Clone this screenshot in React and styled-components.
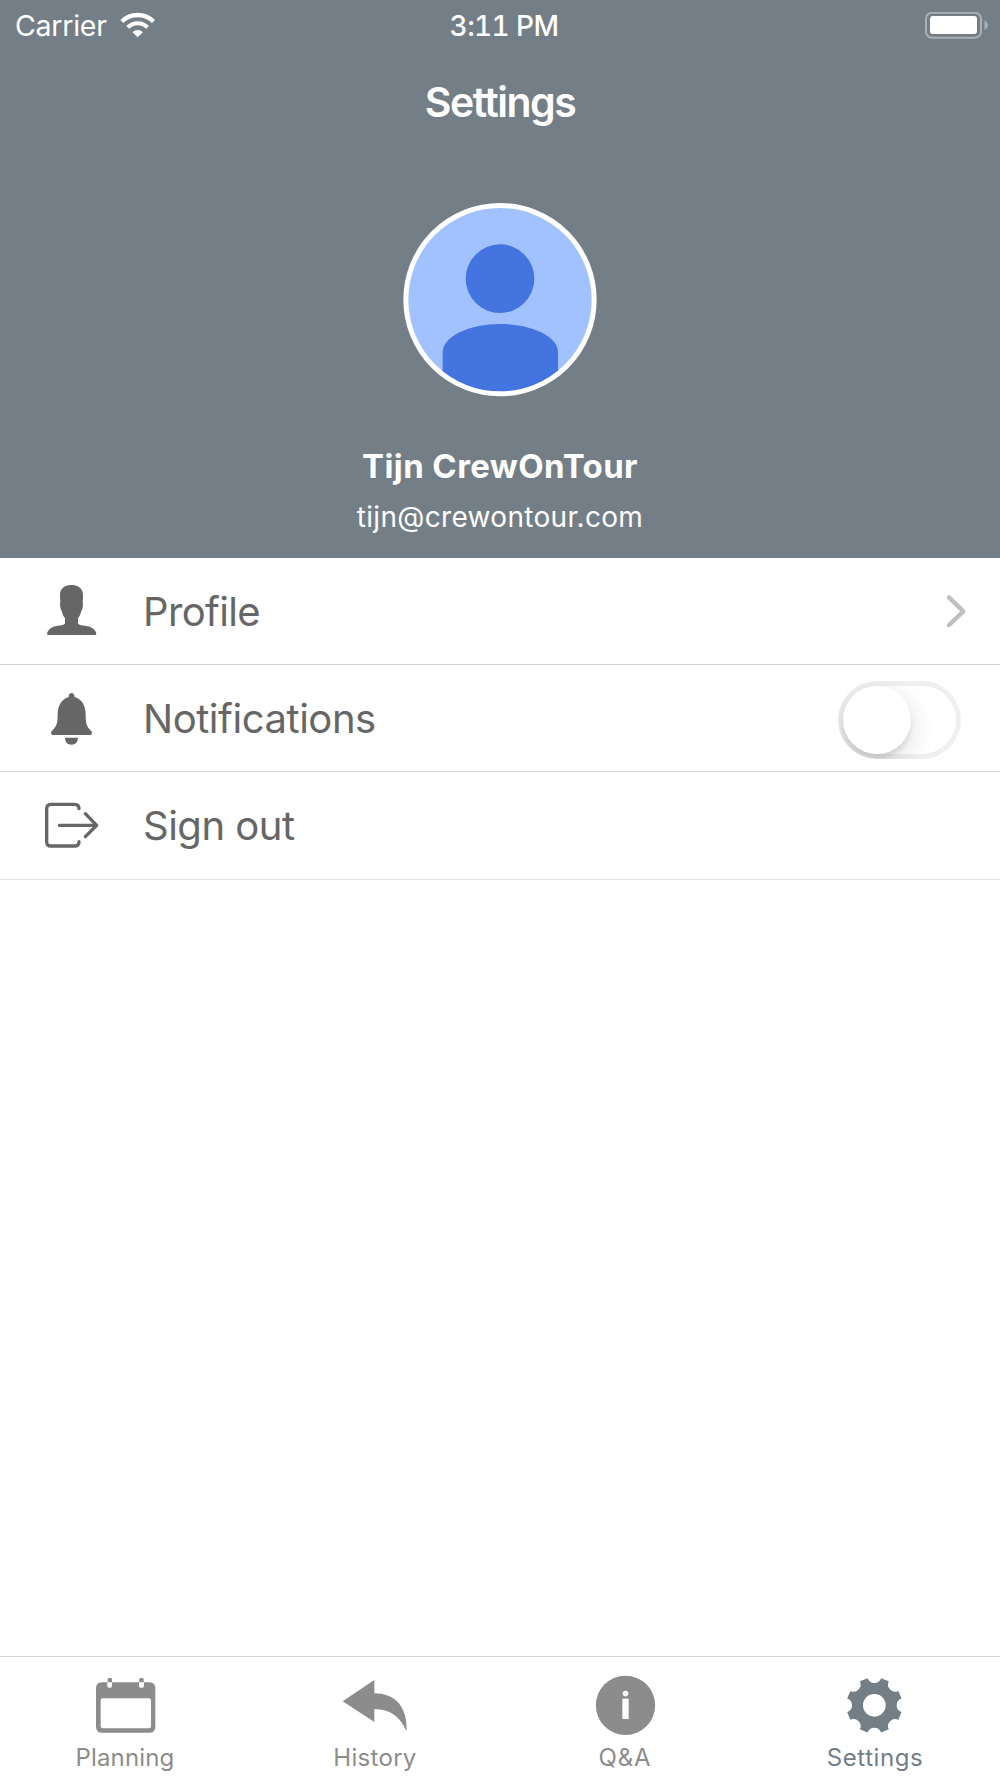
import React from "react";
import styled, { createGlobalStyle } from "styled-components";

const slate = "#737e86";

const GlobalStyle = createGlobalStyle`
  * { box-sizing: border-box; }
  body { margin: 0; background: #fff; }
`;

const Screen = styled.div`
  width: 1000px;
  height: 1778px;
  display: flex;
  flex-direction: column;
  background: #fff;
  font-family: Inter, "Liberation Sans", sans-serif;
  overflow: hidden;
`;

const Header = styled.header`
  height: 558px;
  flex: none;
  background: ${slate};
  color: #fff;
  display: flex;
  flex-direction: column;
  align-items: center;
`;

const StatusBar = styled.div`
  width: 100%;
  height: 50px;
  display: grid;
  grid-template-columns: 1fr auto 1fr;
  align-items: center;
  padding: 0 11px 0 15px;
`;

const CarrierGroup = styled.div`
  display: flex;
  align-items: center;
  gap: 13px;
`;

const WifiGlyph = styled.svg`
  width: 36px;
  height: 26px;
  margin-top: -2px;
`;

const BatterySlot = styled.div`
  display: flex;
  justify-content: flex-end;
`;

const CarrierName = styled.span`
  padding-top: 1px;
  font-size: 28.5px;
  line-height: 50px;
  letter-spacing: -0.25px;
`;

const Clock = styled.time`
  padding: 1px 0 0 4px;
  font-size: 28px;
  line-height: 50px;
  font-weight: 500;
  font-variant-numeric: tabular-nums;
  letter-spacing: -0.6px;
  white-space: nowrap;
`;

const Title = styled.h1`
  margin: 27px 0 0;
  font-size: 41px;
  line-height: 50px;
  font-weight: 600;
  letter-spacing: -1.5px;
`;

const Avatar = styled.svg`
  width: 194px;
  height: 194px;
  margin-top: 76px;
  flex: none;
`;

const Name = styled.div`
  margin-top: 49px;
  font-size: 33px;
  line-height: 40px;
  font-weight: 700;
  letter-spacing: 0.4px;
`;

const Email = styled.div`
  margin-top: 12px;
  font-size: 28px;
  line-height: 38px;
  font-weight: 400;
  letter-spacing: 0.32px;
`;

const List = styled.main`
  flex: 1;
  color: #666;
`;

const Row = styled.div`
  height: ${(p) => (p.$last ? 108 : 107)}px;
  display: flex;
  align-items: center;
  padding: 0 32px ${(p) => (p.$last ? 1 : 0)}px 41px;
  border-bottom: 1px solid ${(p) => (p.$last ? "#e4e4e4" : "#d4d6d6")};
`;

const RowIcon = styled.svg`
  width: 60px;
  height: 60px;
  flex: none;
`;

const RowLabel = styled.div`
  flex: 1;
  padding-top: 2px;
  margin-left: 42px;
  font-size: 40px;
  line-height: 50px;
  letter-spacing: ${(p) => p.$track}px;
`;

const Switch = styled.div`
  width: 123px;
  height: 78px;
  margin-right: 7px;
  margin-top: 4px;
  border-radius: 39px;
  border: 5px solid #f0f0f0;
  overflow: clip;
  overflow-clip-margin: border-box;
`;

const Knob = styled.div`
  width: 68px;
  height: 68px;
  border-radius: 50%;
  background: #fff;
  box-shadow: 0 8px 26px rgba(0, 0, 0, 0.15), 0 5px 4px rgba(0, 0, 0, 0.08);
`;

const TabBar = styled.nav`
  height: 122px;
  flex: none;
  display: grid;
  grid-template-columns: repeat(4, 1fr);
  border-top: 1px solid #d6d6d6;
`;

const Tab = styled.div`
  display: flex;
  flex-direction: column;
  align-items: center;
  padding-top: 9px;
  color: ${(p) => (p.$active ? slate : "#8c8c8c")};
`;

const TabIcon = styled.svg`
  width: 72px;
  height: 72px;
`;

const TabLabel = styled.div`
  margin-top: 4px;
  font-size: 24px;
  line-height: 32px;
  letter-spacing: ${(p) => p.$track}px;
`;

const gearPath = (() => {
  const point = (deg) => {
    const a = (deg * Math.PI) / 180;
    return `${(223 + 84 * Math.cos(a)).toFixed(2)} ${(196 + 84 * Math.sin(a)).toFixed(2)}`;
  };
  let d = "";
  for (let i = 0; i < 8; i++) {
    const c = i * 45;
    d += `${i ? "L" : "M"}${point(c - 14)}A21.5 21.5 0 0 0 ${point(c + 14)}`;
  }
  return `${d}ZM257 196A34 34 0 1 0 189 196A34 34 0 1 0 257 196Z`;
})();

const WifiIcon = () => (
  <WifiGlyph viewBox="360 33 108 78" fill="none" stroke="#fff">
    <path d="M365.6 61.6A67 67 0 0 1 460.4 61.6" strokeWidth="13" />
    <path d="M383.3 79.3A42 42 0 0 1 442.7 79.3" strokeWidth="12" />
    <path d="M413 109L397.5 93.5A22 22 0 0 1 428.5 93.5Z" fill="#fff" stroke="none" />
  </WifiGlyph>
);

const BatteryIcon = () => (
  <svg width="64" height="28" viewBox="925 11 64 28">
    <rect x="926" y="11.7" width="55" height="25" rx="6" fill="none" stroke="#aab0b5" strokeWidth="2" />
    <rect x="930" y="15" width="47" height="18" rx="3" fill="#fff" />
    <path d="M984.5 19.3C989 21.5 989 26.8 984.5 29Z" fill="#aab0b5" />
  </svg>
);

const rows = [
  {
    label: "Profile",
    track: -0.65,
    icon: (
      <RowIcon viewBox="123 63 180 180" fill="currentColor">
        <path d="M214.500 75C229 75 249 82 249 104Q249 117 248 127Q250 130 248.500 137Q248 144 246 149Q243 154 242 160Q240 168 234 175V190C236 197 250 196 264 199C279 203 287 211 289 221Q289 225 285 225H145Q141 225 141 221C143 211 151 203 165 199C179 196 193 197 195 190V175Q189 168 187 160Q186 154 183 149Q181 144 180.500 137Q179 130 181 127Q180 117 180 104C180 82 200 75 214.500 75Z" />
      </RowIcon>
    ),
    control: (
      <svg width="24" height="36" viewBox="434 99 72 108" fill="none" stroke="#bfbfbf" strokeWidth="13" strokeLinecap="round" strokeLinejoin="round">
        <path d="M449 112L492 154L449 195" />
      </svg>
    ),
  },
  {
    label: "Notifications",
    track: -0.45,
    icon: (
      <RowIcon viewBox="123 384 180 180" fill="currentColor">
        <path d="M214.500 399Q223 400 224 411C246 417 257 438 257 464C257 491 260 500 273 512Q277 516 276 520Q275 525 270 525H159Q154 525 153 520Q152 516 156 512C169 500 173 491 173 464C173 438 184 417 206 411Q206 400 214.500 399Z" />
        <path d="M195 533H234Q233 554 214.500 554Q196 554 195 533Z" />
      </RowIcon>
    ),
    control: (
      <Switch role="switch" aria-checked="false">
        <Knob />
      </Switch>
    ),
  },
  {
    label: "Sign out",
    track: -0.5,
    icon: (
      <RowIcon viewBox="123 705 180 180" fill="none" stroke="currentColor" strokeWidth="10" strokeLinecap="round" strokeLinejoin="round">
        <path d="M237 746Q237 733 224 733H153Q140 733 140 746V845Q140 858 153 858H224Q237 858 237 845" />
        <path d="M178 796H289M256 761L290 796L256 830" />
      </RowIcon>
    ),
  },
];

const tabs = [
  {
    label: "Planning",
    track: 0.15,
    icon: (
      <TabIcon viewBox="147 78 216 216" fill="currentColor">
        <path fillRule="evenodd" d="M186 127H202V138Q202 143 207 143H211Q216 143 216 138V127H297V138Q297 143 302 143H307Q312 143 312 138V127H328Q346 127 346 145V260Q346 278 328 278H186Q168 278 168 260V145Q168 127 186 127ZM188 175Q182 175 182 181V259Q182 265 188 265H327Q333 265 333 259V181Q333 175 327 175Z" />
        <path d="M203 127V118Q203 114 207 114H212Q216 114 216 118V127ZM298 127V118Q298 114 302 114H307Q311 114 311 118V127Z" />
      </TabIcon>
    ),
  },
  {
    label: "History",
    track: 0.3,
    icon: (
      <TabIcon viewBox="117 78 216 216" fill="currentColor">
        <path d="M128 184L223 120V160C285 160 322 200 320 271H318C302 232 270 207 223 207V246Z" />
      </TabIcon>
    ),
  },
  {
    label: "Q&A",
    track: 0.9,
    icon: (
      <TabIcon viewBox="87 78 216 216" fill="currentColor">
        <circle cx="196.500" cy="196" r="89" />
        <circle cx="196.500" cy="160.500" r="8.500" fill="#fff" />
        <path d="M187 176H206V237H187Z" fill="#fff" />
      </TabIcon>
    ),
  },
  {
    label: "Settings",
    track: 0.55,
    active: true,
    icon: (
      <TabIcon viewBox="117 78 216 216" fill="currentColor">
        <path fillRule="evenodd" d={gearPath} />
      </TabIcon>
    ),
  },
];

export default function App() {
  return (
    <Screen>
      <GlobalStyle />
      <Header>
        <StatusBar>
          <CarrierGroup>
            <CarrierName>Carrier</CarrierName>
            <WifiIcon />
          </CarrierGroup>
          <Clock>3:11 PM</Clock>
          <BatterySlot>
            <BatteryIcon />
          </BatterySlot>
        </StatusBar>
        <Title>Settings</Title>
        <Avatar viewBox="39 39 582 582">
          <clipPath id="avatar-clip">
            <circle cx="330" cy="329" r="282" />
          </clipPath>
          <circle cx="330" cy="329" r="283" fill="#a1c2ff" />
          <g fill="#4374e0" clipPath="url(#avatar-clip)">
            <circle cx="330" cy="266" r="103" />
            <path d="M158 640V486C158 440 236 402 331 402S504 440 504 486V640Z" />
          </g>
          <circle cx="330" cy="329" r="282.500" fill="none" stroke="#fff" strokeWidth="15" />
        </Avatar>
        <Name>Tijn CrewOnTour</Name>
        <Email>tijn@crewontour.com</Email>
      </Header>
      <List>
        {rows.map((row, i) => (
          <Row key={row.label} $last={i === rows.length - 1}>
            {row.icon}
            <RowLabel $track={row.track}>{row.label}</RowLabel>
            {row.control}
          </Row>
        ))}
      </List>
      <TabBar>
        {tabs.map((tab) => (
          <Tab key={tab.label} $active={tab.active}>
            {tab.icon}
            <TabLabel $track={tab.track}>{tab.label}</TabLabel>
          </Tab>
        ))}
      </TabBar>
    </Screen>
  );
}
